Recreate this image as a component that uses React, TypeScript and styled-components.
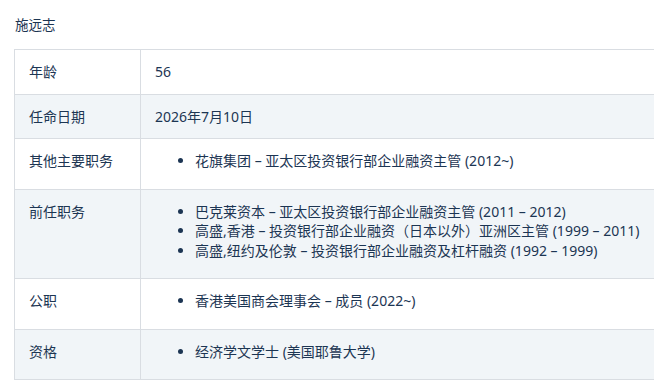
import React from 'react';
import styled, { createGlobalStyle } from 'styled-components';

const GlobalStyle = createGlobalStyle`
  html, body {
    margin: 0;
    padding: 0;
    background: #ffffff;
    overflow: hidden;
  }
  body {
    font-family: 'Noto Sans', 'Noto Sans CJK SC', sans-serif;
    color: #1c3553;
  }
`;

const Page = styled.div`
  width: 654px;
  height: 390px;
  padding: 15px 0 0 14px;
  box-sizing: border-box;
  overflow: hidden;
`;

const Name = styled.h3`
  margin: 0 0 14px 1px;
  font-size: 13.5px;
  font-weight: 400;
  line-height: 20px;
`;

const Table = styled.table`
  width: 660px;
  border-collapse: collapse;
  font-size: 14px;
  line-height: 19.5px;
`;

const Row = styled.tr<{ $shade: boolean }>`
  background-color: ${({ $shade }) => ($shade ? '#f1f5f8' : '#ffffff')};
`;

const Label = styled.th`
  width: 126px;
  box-sizing: border-box;
  padding: 12px 14px;
  border: 1px solid #d9dde2;
  font-weight: 400;
  text-align: left;
  vertical-align: top;
`;

const Value = styled.td`
  padding: 12px 14px;
  border: 1px solid #d9dde2;
  vertical-align: top;
`;

const List = styled.ul`
  margin: 0 0 6px;
  padding-left: 40px;
`;

const Item = styled.li`
  line-height: 19.5px;
`;

interface Entry {
  label: string;
  value?: string;
  items?: string[];
}

const rows: Entry[] = [
  { label: '年龄', value: '56' },
  { label: '任命日期', value: '2026年7月10日' },
  { label: '其他主要职务', items: ['花旗集团 – 亚太区投资银行部企业融资主管 (2012~)'] },
  {
    label: '前任职务',
    items: [
      '巴克莱资本 – 亚太区投资银行部企业融资主管 (2011 – 2012)',
      '高盛,香港 – 投资银行部企业融资（日本以外）亚洲区主管 (1999 – 2011)',
      '高盛,纽约及伦敦 – 投资银行部企业融资及杠杆融资 (1992 – 1999)',
    ],
  },
  { label: '公职', items: ['香港美国商会理事会 – 成员 (2022~)'] },
  { label: '资格', items: ['经济学文学士 (美国耶鲁大学)'] },
];

const App = () => {
  return (
    <Page>
      <GlobalStyle />
      <Name>施远志</Name>
      <Table>
        <tbody>
          {rows.map((row, i) => (
            <Row key={row.label} $shade={i % 2 === 1}>
              <Label>{row.label}</Label>
              <Value>
                {row.items ? (
                  <List>
                    {row.items.map((item) => (
                      <Item key={item}>{item}</Item>
                    ))}
                  </List>
                ) : (
                  row.value
                )}
              </Value>
            </Row>
          ))}
        </tbody>
      </Table>
    </Page>
  );
};

export default App;
